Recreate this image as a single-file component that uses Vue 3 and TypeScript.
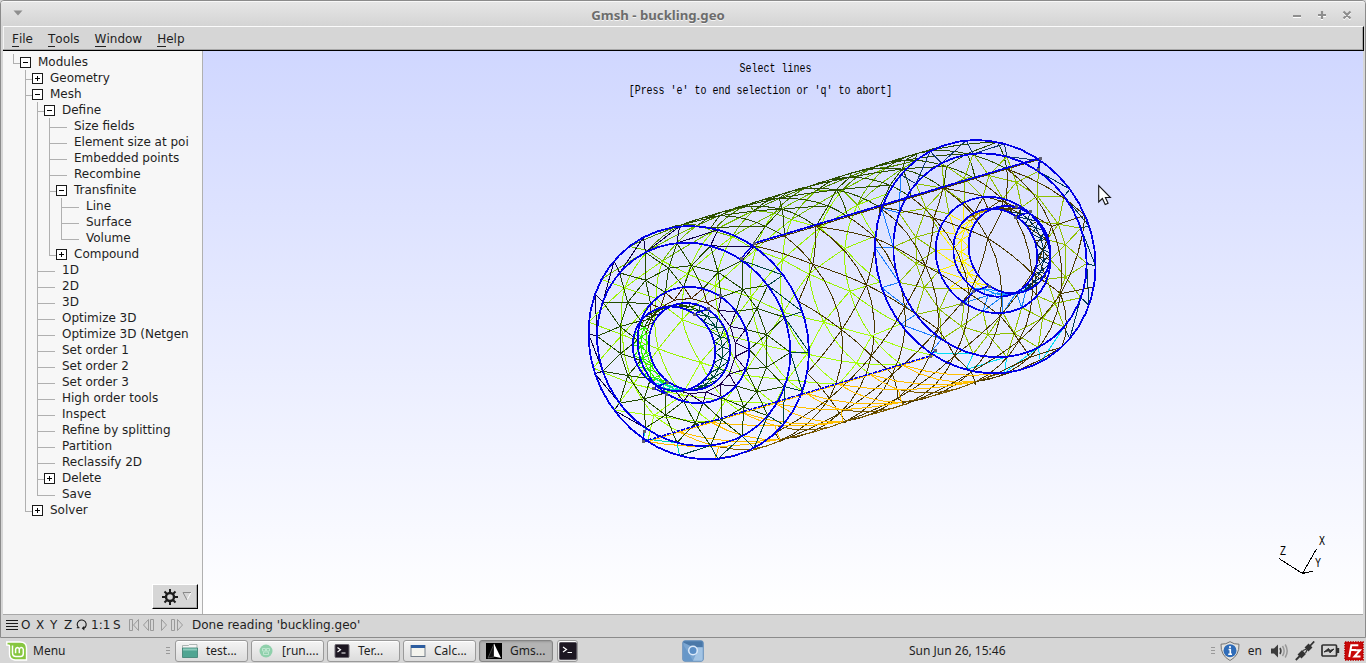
<script setup lang="ts">
type Kind = 'open' | 'closed' | 'leaf'
type Pt = { x: number; y: number; t: number; k?: number }
type Ring = { cx: number; cy: number; rx: number; ry: number }

const items: [number, string, Kind][] = [
  [0, 'Modules', 'open'],
  [1, 'Geometry', 'closed'],
  [1, 'Mesh', 'open'],
  [2, 'Define', 'open'],
  [3, 'Size fields', 'leaf'],
  [3, 'Element size at poi', 'leaf'],
  [3, 'Embedded points', 'leaf'],
  [3, 'Recombine', 'leaf'],
  [3, 'Transfinite', 'open'],
  [4, 'Line', 'leaf'],
  [4, 'Surface', 'leaf'],
  [4, 'Volume', 'leaf'],
  [3, 'Compound', 'closed'],
  [2, '1D', 'leaf'],
  [2, '2D', 'leaf'],
  [2, '3D', 'leaf'],
  [2, 'Optimize 3D', 'leaf'],
  [2, 'Optimize 3D (Netgen', 'leaf'],
  [2, 'Set order 1', 'leaf'],
  [2, 'Set order 2', 'leaf'],
  [2, 'Set order 3', 'leaf'],
  [2, 'High order tools', 'leaf'],
  [2, 'Inspect', 'leaf'],
  [2, 'Refine by splitting', 'leaf'],
  [2, 'Partition', 'leaf'],
  [2, 'Reclassify 2D', 'leaf'],
  [2, 'Delete', 'closed'],
  [2, 'Save', 'leaf'],
  [1, 'Solver', 'closed'],
]

// A guide continues below a row while a later sibling exists at that level.
function continues(index: number, level: number): boolean {
  for (let i = index + 1; i < items.length; i++) {
    if (items[i][0] === level) return true
    if (items[i][0] < level) return false
  }
  return false
}
const rows = items.map(([level, label, kind], i) => ({
  label,
  kind,
  guides: Array.from({ length: level }, (_, l) => continues(i, l)),
  more: continues(i, level),
}))

const menus = ['File', 'Tools', 'Window', 'Help']
const tasks = [
  { icon: 'folder', label: 'test...' },
  { icon: 'globe', label: '[run....' },
  { icon: 'term', label: 'Ter...' },
  { icon: 'window', label: 'Calc...' },
  { icon: 'gmsh', label: 'Gms...' },
]

// ---- mesh ----
const SKEW = 0.08
const RAD = Math.PI / 180
const ring = (cx: number, cy: number, rx: number, ry: number): Ring => ({ cx, cy, rx, ry })
const at = (r: Ring, deg: number): Pt => ({
  x: r.cx + r.rx * Math.cos(deg * RAD),
  y: r.cy + r.ry * Math.sin(deg * RAD + SKEW),
  t: deg,
})
const mix = (a: Ring, b: Ring, k: number): Ring =>
  ring(a.cx + (b.cx - a.cx) * k, a.cy + (b.cy - a.cy) * k, a.rx + (b.rx - a.rx) * k, a.ry + (b.ry - a.ry) * k)

const front = {
  rim: ring(698.7, 342.7, 110.3, 116.7),
  face: ring(693.7, 344.3, 96.7, 101.7),
  lip: ring(693.3, 345, 55.8, 58.2),
  boreOut: ring(689.3, 346.5, 40.7, 43.5),
  boreIn: ring(674, 348.8, 41.3, 42.3),
}
const back = {
  rim: ring(985.3, 256.7, 110.3, 116.7),
  face: ring(990, 255.3, 96.7, 102),
  lip: ring(993, 255, 57.5, 58.2),
  boreOut: ring(995.3, 252.7, 42, 44),
  boreIn: ring(1009.5, 249.7, 41, 43.7),
}

let seed = 7
const rnd = () => {
  seed = (seed * 16807) % 2147483647
  return seed / 2147483647 - 0.5
}
const paths: Record<string, string> = {}
const draw = (color: string, pts: Pt[]) => {
  paths[color] = (paths[color] ?? '') + 'M' + pts.map((p) => `${p.x.toFixed(1)} ${p.y.toFixed(1)}`).join('L')
}
const onShell = (k: number, deg: number): Pt => ({ ...at(mix(front.rim, back.rim, k), deg), k })
// Edges on the shell are curved: they follow the surface between their nodes.
const edge = (color: string, a: Pt, b: Pt) => {
  if (a.k === undefined || b.k === undefined) return draw(color, [a, b])
  const pts = [a]
  for (let s = 1; s < 4; s++) pts.push(onShell(a.k + ((b.k - a.k) * s) / 4, a.t + ((b.t - a.t) * s) / 4))
  pts.push(b)
  draw(color, pts)
}
const circle = (r: Ring, start: number, n: number, jitter = 0): Pt[] => {
  const list: Pt[] = []
  for (let i = 0; i < n; i++) list.push(at(r, start + (i * 360) / n + rnd() * jitter))
  list.push({ ...list[0], t: list[0].t + 360 })
  return list
}
type Shade = (deg: number) => string
const strip = (a: Pt[], b: Pt[], shade: Shade) => {
  let i = 0
  let j = 0
  edge(shade(a[0].t), a[0], b[0])
  while (i < a.length - 1 || j < b.length - 1) {
    const stepA = j === b.length - 1 || (i < a.length - 1 && a[i + 1].t <= b[j + 1].t)
    if (stepA) i++
    else j++
    edge(shade((a[i].t + b[j].t) / 2), a[i], b[j])
  }
}
const chain = (a: Pt[], shade: Shade) => {
  for (let i = 1; i < a.length; i++) edge(shade((a[i].t + a[i - 1].t) / 2), a[i - 1], a[i])
}
const norm = (d: number) => ((d % 360) + 360) % 360

// outer shell: two halves joined at the seams
const LAYERS = 9
const shell = (from: number, to: number, count: number, shade: Shade) => {
  let prev: Pt[] = []
  const step = (to - from) / count
  for (let l = 0; l <= LAYERS; l++) {
    const pts: Pt[] = []
    const odd = l % 2 === 1
    const base = l / LAYERS
    const rim = l === 0 || l === LAYERS
    pts.push(onShell(base, from))
    for (let i = odd && !rim ? 0 : 1; i < count; i++) {
      const k = rim ? base : base + rnd() * 0.025
      const d = from + i * step + (odd && !rim ? step / 2 : 0) + (rim ? 0 : rnd() * 6)
      pts.push(onShell(k, d))
    }
    pts.push(onShell(base, to))
    if (l > 0) strip(prev, pts, shade)
    if (l > 0 && l < LAYERS) chain(pts, shade)
    prev = pts
  }
}
shell(117.5, 299, 8, (d) => {
  if (d < 150) return '#a6ff0d'
  if (d < 212) return '#99f500'
  if (d < 228) return '#74bd00'
  if (d < 240) return '#4f8500'
  return '#2c4f00'
})

// rear end
const backFace = circle(back.face, -60, 18)
const backMid = circle(ring(991, 255.3, 76, 80), -50, 18, 6)
const backLip = circle(back.lip, -60, 18)
const olive: Shade = () => '#8fc000'
strip(backFace, backMid, olive)
chain(backMid, olive)
strip(backMid, backLip, olive)
strip(circle(back.rim, -60, 18), backFace, (d) => {
  const a = norm(d)
  if (a > 300 || a < 45) return '#003a55'
  if (a < 120) return '#00dcf5'
  if (a < 215) return '#1a7cff'
  return '#10386e'
})
const rearBore: Shade = (d) => {
  const a = norm(d)
  if (a > 120 && a < 215) return '#fff000'
  if (a >= 215 && a < 262) return '#b89a00'
  if (a >= 262 && a < 290) return '#4a3801'
  if (a > 62 && a <= 120) return '#1595ff'
  return '#003057'
}
strip(backLip, circle(back.boreOut, -60, 18), (d) => {
  const a = norm(d)
  if (a > 120 && a < 240) return '#fff000'
  if (a > 40 && a <= 120) return '#1480f5'
  return '#4a3801'
})
const rearMid = circle(mix(back.boreOut, back.boreIn, 0.5), -50, 24, 4)
strip(circle(back.boreOut, -60, 24), rearMid, rearBore)
chain(rearMid, rearBore)
strip(rearMid, circle(back.boreIn, -60, 24), rearBore)

shell(-61, 117.5, 5, (d) => {
  if (d < 72) return '#4a3800'
  if (d < 86) return '#7d5c00'
  return '#ffbf00'
})

// near end
const frontFace = circle(front.face, -60, 18)
const frontMid = circle(ring(693.7, 344.5, 74.5, 79), -50, 18, 5)
const frontLip = circle(front.lip, -60, 18)
const green: Shade = () => '#214a00'
strip(frontFace, frontMid, green)
chain(frontMid, green)
strip(frontMid, frontLip, green)
strip(circle(front.rim, -60, 18), frontFace, (d) => {
  const a = norm(d)
  if (a > 300 || a < 100) return '#004540'
  if (a < 122) return '#00d8b0'
  return '#0c0048'
})
const lipShade: Shade = (d) => {
  const a = norm(d)
  if (a > 200 && a < 300) return '#4a2600'
  if (a >= 300 || a < 110) return '#1c004c'
  return '#45e600'
}
const lipMid = circle(mix(front.lip, front.boreOut, 0.7), -50, 18, 4)
strip(frontLip, lipMid, lipShade)
chain(lipMid, lipShade)
const nearBore: Shade = (d) => {
  const a = norm(d)
  if (a > 125 && a < 205) return '#2bf000'
  if (a >= 205 && a < 290) return '#1f4d00'
  if (a > 75 && a <= 125) return '#00e0b0'
  return '#004a38'
}
const nearMid = circle(mix(front.boreOut, front.boreIn, 0.5), -50, 24, 4)
strip(circle(front.boreOut, -60, 24), nearMid, nearBore)
chain(nearMid, nearBore)
strip(nearMid, circle(front.boreIn, -60, 24), nearBore)

const outline = (r: Ring): string => {
  let d = ''
  for (let a = 0; a < 360; a += 8) {
    const p = at(r, a)
    d += `${a ? 'L' : 'M'}${p.x.toFixed(1)} ${p.y.toFixed(1)}`
  }
  return d + 'Z'
}
const curves = [...Object.values(front), ...Object.values(back)].map(outline)
const knots: [number, number][] = [
  [754, 243.5], [741.5, 258], [720.5, 295], [708.5, 308.5], [694, 314], [644, 431], [643, 441.5],
  [653, 388], [666, 394], [667.5, 382.5], [1040, 158], [1038, 169], [1016, 206], [1015.5, 217.5],
  [1030.5, 211.5], [935, 350], [930, 356.5], [961.5, 304.5], [973.5, 291.5], [989, 286],
]
</script>

<template>
  <div class="screen">
    <section class="window">
      <header class="titlebar">
        <svg class="tri" width="10" height="7" viewBox="0 0 10 7"><path d="M0.5 0.5h9L5 5.5z" fill="#8e8e8e" /></svg>
        <h1>Gmsh - buckling.geo</h1>
        <svg class="winbtns" width="60" height="14" viewBox="0 0 60 14" fill="none">
          <g stroke="#fff" stroke-width="2.2" transform="translate(0 1)"><path d="M0 8h8M25 7h8M29 3v8M50.500 3.500l7 7M57.500 3.500l-7 7" /></g>
          <g stroke="#8e8e8e" stroke-width="2.2"><path d="M0 8h8M25 7h8M29 3v8M50.500 3.500l7 7M57.500 3.500l-7 7" /></g>
        </svg>
      </header>
      <nav class="menubar">
        <span v-for="m in menus" :key="m"><u>{{ m[0] }}</u>{{ m.slice(1) }}</span>
      </nav>
      <main class="body">
        <aside class="side">
          <ul class="tree">
            <li v-for="r in rows" :key="r.label">
              <i v-for="(g, n) in r.guides" :key="n" class="guide" :class="{ on: g }"></i>
              <span class="joint" :class="[r.kind, { more: r.more }]">
                <svg v-if="r.kind !== 'leaf'" width="11" height="11" viewBox="0 0 11 11" shape-rendering="crispEdges">
                  <path d="M.5.5h10v10h-10z" fill="#fff" stroke="#1a1a1a" />
                  <path d="M3 5.500h5" stroke="#000" />
                  <path v-if="r.kind === 'closed'" d="M5.500 3v5" stroke="#000" />
                </svg>
              </span>
              <span>{{ r.label }}</span>
            </li>
          </ul>
          <button class="gear">
            <svg width="16" height="16" viewBox="0 0 16 16" fill="none" stroke="#1c1c1c">
              <circle cx="8" cy="8" r="4" stroke-width="2.400" />
              <path d="M8 0v3.500M8 12.500v3.500M0 8h3.500M12.500 8h3.500M2.500 2.500l2.300 2.300M11.200 11.200l2.300 2.300M13.500 2.500l-2.300 2.300M4.800 11.200l-2.300 2.300" stroke-width="2" />
            </svg>
            <svg width="10" height="9" viewBox="0 0 10 9" fill="none"><path d="M9 .5L5 8" stroke="#fff" /><path d="M5 8L1 .5h8" stroke="#8a8a8a" /></svg>
          </button>
        </aside>
        <div class="canvas">
          <svg class="scene" width="1160" height="563" viewBox="203 51 1160 563" fill="none">
            <g shape-rendering="crispEdges">
              <path v-for="(d, c) in paths" :key="c" :d="d" :stroke="c" />
              <path d="M753 243.500L1040 158" stroke="#0000e6" stroke-width="1.700" />
              <path d="M643 441.500L930 356" stroke="#0000e6" stroke-width="1.500" stroke-dasharray="4 1" />
              <path v-for="(d, i) in curves" :key="i" :d="d" stroke="#0000e6" stroke-width="1.800" />
              <path d="M754 243.500L741.500 258M708.500 308.500L694 314M643 441.500L644 431M653 388L666 394M667.500 382.500L653 388M1040 158L1038 169M1015.500 217.500L1030.500 211.500M935 350L930 356.500M961.500 304.500L973.500 291.500L989 286" stroke="#0000e6" stroke-width="1.500" />
              <rect v-for="(k, i) in knots" :key="i" :x="k[0] - 1.5" :y="k[1] - 1.5" width="3" height="3" fill="#5e5e6e" />
              <path d="M1279 558.500L1302.500 573.500L1316.500 549M1302.500 573.500L1313 571" stroke="#000" />
            </g>
            <g class="raster">
              <text transform="translate(775.500 72) scale(1 1.220)" text-anchor="middle">Select lines</text>
              <text transform="translate(760.500 94) scale(1 1.220)" text-anchor="middle">[Press 'e' to end selection or 'q' to abort]</text>
              <text transform="translate(1319 545) scale(1 1.220)">X</text>
              <text transform="translate(1315 567) scale(1 1.220)">Y</text>
              <text transform="translate(1280 555) scale(1 1.220)">Z</text>
            </g>
            <path d="M1098.700 185.500v16.500l3.700-3.500l2.800 6l2.900-1.300l-2.700-5.700h5z" fill="#fff" stroke="#111" stroke-width="1.100" />
          </svg>
        </div>
      </main>
      <footer class="status">
        <svg width="13" height="12" viewBox="0 0 13 12" shape-rendering="crispEdges"><path d="M0 1.500h12M0 4.500h12M0 7.500h12M0 10.500h12" stroke="#1a1a1a" /></svg>
        <span class="o">O</span><span class="x">X</span><span class="y">Y</span><span class="z">Z</span>
        <svg class="rot" width="12" height="12" viewBox="0 0 12 12" fill="none" stroke="#1a1a1a" stroke-width="1.100"><path d="M2.600 8.700A4.500 4.500 0 1 1 8 9.300" /><path d="M.8 8.700H3.500" /><path d="M8.300 6.800L5.700 9.300L8.300 11.500z" fill="#1a1a1a" stroke="none" /></svg>
        <span class="ratio">1:1</span><span class="s">S</span>
        <svg class="play" width="54" height="12" viewBox="0 0 54 12" fill="none" stroke="#9a9a9a">
          <path d="M.5.5h3v11h-3zM9.500.5v11L4.500 6zM19.500.5v11L14.500 6zM21.500.5h3v11h-3zM32.500.5v11L37.500 6zM42.500.5h3v11h-3zM48.500.5v11L53.500 6z" />
        </svg>
        <span class="msg">Done reading 'buckling.geo'</span>
      </footer>
    </section>
    <footer class="panel">
      <svg class="mint" width="22" height="20" viewBox="0 0 22 20">
        <path d="M.8 1H14Q20.500 1 20.500 7V19H9Q3.500 18.500 3.500 13V5Q3.500 4 .8 4z" fill="#86c63f" stroke="#fff" stroke-width="1.400" />
        <path d="M6.500 4.500V12Q6.500 15.500 10 15.500H14.500Q17.300 15.500 17.300 12.500V8.500Q17 6.300 14.800 6.600Q13.300 7 13.300 8.500V12.200M13.300 8.500Q13 6.500 11.300 6.600Q9.600 7 9.600 8.500V12.200" fill="none" stroke="#fff" stroke-width="1.500" />
      </svg>
      <span class="menu">Menu</span>
      <i class="grip"></i>
      <div class="tasks">
        <div v-for="t in tasks" :key="t.label" class="task" :class="{ active: t.icon === 'gmsh' }">
          <svg width="16" height="16" viewBox="0 0 16 16">
            <template v-if="t.icon === 'folder'">
              <path d="M.5 2.500h6l1-1h7.500v5H.5z" fill="#f4f4f4" stroke="#9aa5a2" stroke-width=".8" />
              <path d="M.5 5h15v9.500H.5z" fill="#4fa592" stroke="#3b7e70" stroke-width=".8" />
              <path d="M1 5.500h14v2H1z" fill="#8ccbbc" />
            </template>
            <template v-else-if="t.icon === 'globe'">
              <circle cx="8" cy="8" r="6.500" fill="#8fd0ab" />
              <path d="M4.500 5.500h3v2.500h-3zM8.500 5.500h3v2.500h-3zM5.500 9h5v2.500h-5z" fill="none" stroke="#c2e8d3" stroke-width=".9" />
            </template>
            <template v-else-if="t.icon === 'term'">
              <rect x="1" y="1.500" width="14" height="13" rx="1" fill="#1d1722" stroke="#6c6870" />
              <path d="M3.500 4.500l3 2.200l-3 2.200M7.500 10h4" fill="none" stroke="#fff" stroke-width="1.200" />
            </template>
            <template v-else-if="t.icon === 'window'">
              <rect x="1" y="2.500" width="14" height="11" fill="#f4f4ee" stroke="#76808a" />
              <path d="M1 2h14v3H1z" fill="#2d5da0" />
            </template>
            <template v-else>
              <path d="M0 0h16v16H0z" fill="#000" /><path d="M8 1v13l-6 1z" fill="#111" stroke="#888" stroke-width=".5" /><path d="M8 .5L15 15L8 13.500z" fill="#fff" />
            </template>
          </svg>
          <span>{{ t.label }}</span>
        </div>
        <div class="task mini">
          <svg width="18" height="18" viewBox="0 0 18 18"><rect x=".5" y=".5" width="17" height="17" rx="1" fill="#1d1722" stroke="#55505a" /><path d="M4 5l3.500 2.500L4 10M8.500 10.500h4.500" fill="none" stroke="#fff" stroke-width="1.200" /></svg>
        </div>
      </div>
      <svg class="chrome" width="22" height="22" viewBox="0 0 22 22">
        <rect x=".8" y=".8" width="20.400" height="20.400" rx="2" fill="#7ba6d2" stroke="#5a88b8" />
        <path d="M1.300 2.500Q1.300 1.300 2.500 1.300H19.500Q20.700 1.300 20.700 2.500V7H11z" fill="#4a78a8" />
        <path d="M1.300 5L7.500 14.500L11 20.700H2.500Q1.300 20.700 1.300 19.500z" fill="#6797c8" />
        <path d="M15 12L11 20.700H19.500Q20.700 20.700 20.700 19.500V7.500H14z" fill="#a3c4e4" />
        <circle cx="11" cy="10.500" r="5" fill="#dceafa" /><circle cx="11" cy="10.500" r="3.500" fill="#5b8fc6" />
      </svg>
      <span class="clock">Sun Jun 26, 15:46</span>
      <div class="tray">
        <i class="grip"></i>
        <svg class="shield" width="20" height="20" viewBox="0 0 20 20">
          <path d="M10 .7Q14 3.500 19 3.200Q19.500 14.500 10 19.500Q.5 14.500 1 3.200Q6 3.500 10 .7z" fill="#e3e3e0" stroke="#747474" />
          <circle cx="10" cy="9.700" r="6.500" fill="#2f6cb8" /><path d="M10 5v2M8.600 8.500H10.300V13M8.200 13.200h3.800" stroke="#fff" stroke-width="1.600" fill="none" />
        </svg>
        <span class="lang">en</span>
        <svg class="vol" width="19" height="16" viewBox="0 0 19 16" fill="none"><path d="M1 5.500h3l4-4v13l-4-4H1z" fill="#3c3c3c" /><path d="M10 5q1.800 3 0 6" stroke="#444" stroke-width="1.600" /><path d="M12.500 3q3.200 5 0 10M15.200 1.500q4 6.500 0 13" stroke="#999" stroke-width="1.500" /></svg>
        <svg class="plug" width="20" height="20" viewBox="0 0 20 20" stroke="#333" fill="none"><path d="M.8 19l5-5M14.500 5.500l4.700-5" stroke-width="1.800" /><path d="M4.500 15.500l4.500-4.500" stroke-width="5.500" /><path d="M11.500 8.500l4-4" stroke-width="5.500" /><path d="M8 9.500l3.500-1.500M10.500 12l1.500-3" stroke-width="1.200" /></svg>
        <svg class="bat" width="19" height="13" viewBox="0 0 19 13"><rect x="1" y="1" width="14.500" height="11" rx="1" fill="none" stroke="#303030" stroke-width="1.700" /><path d="M16 4h2.200v5H16z" fill="#303030" /><path d="M3 8l4.500-3.500l1.500 2l4-1.500l-4 3.800l-1.500-2z" fill="#303030" stroke="#303030" /></svg>
        <svg class="fz" width="20" height="20" viewBox="0 0 20 20"><rect x="1" y="1" width="18" height="18" fill="#c80a0a" stroke="#b80000" stroke-width="1.600" stroke-dasharray="1.500 1" /><path d="M5.200 16L7.300 4.200h7M6.500 9h5.500M10.500 9.200h5.500L10.500 15.500h6" fill="none" stroke="#fff" stroke-width="2" /></svg>
      </div>
    </footer>
  </div>
</template>

<style>
body { margin: 0; overflow: hidden; background: #d6d6d6; }
</style>

<style scoped>
* { box-sizing: border-box; }
.screen { width: 1366px; height: 663px; display: flex; flex-direction: column; background: #d6d6d6; color: #1e1e1e; font: 12px "DejaVu Sans", sans-serif; overflow: hidden; }
.window { height: 638px; display: flex; flex-direction: column; border: 1px solid #8b8b8b; border-radius: 4px 4px 0 0; padding: 0 2px; background: #d6d6d6; }
.titlebar { height: 25px; flex: none; margin: 0 -2px; padding: 0 12px 0 12px; display: flex; align-items: center; border-top: 1px solid #f8f8f8; border-radius: 3px 3px 0 0; background: linear-gradient(#e6e6e6, #d4d4d4); }
.tri { width: 10px; margin: 0 0 1px 0; }
h1 { flex: 1; margin: 1px 0 0 -24px; text-align: center; font: bold 13.200px/18px "Noto Sans", sans-serif; color: #6c6c6c; text-shadow: 0 1px #f4f4f4; }
.winbtns { margin: 1px 0 0 -24px; }
.menubar { height: 25px; flex: none; margin-right: -1px; padding: 0 0 0 9px; display: flex; gap: 15px; line-height: 24px; background: #d6d6d6; border: solid; border-width: 1px 1px 1px 0; border-color: #fbfbfb #000 #000; box-shadow: inset 0 -1px #a8a8a8, inset -1px 0 #a8a8a8, inset 1px 0 #f4f4f4; }
.menubar u { text-decoration: none; position: relative; }
.menubar u::after { content: ""; position: absolute; left: 0; right: 0; bottom: -1px; height: 1px; background: #222; }
.body { flex: 1; display: flex; min-height: 0; }
.side { width: 200px; flex: none; display: flex; flex-direction: column; justify-content: space-between; background: #f7f7f7; border-right: 1px solid #b0b0b0; }
.tree { list-style: none; margin: 0; padding: 3px 0 0 10px; width: 186px; overflow: hidden; }
.tree li { display: flex; height: 16px; line-height: 16px; white-space: nowrap; }
.guide { width: 12px; flex: none; }
.guide.on { border-left: 1px solid #b0b0b0; }
.joint { position: relative; width: 25px; flex: none; height: 16px; padding: 3px 0 0 7px; line-height: 0; }
.joint::before { content: ""; position: absolute; left: 0; top: 0; height: 10px; border-left: 1px solid #b0b0b0; }
.joint.more::before { height: 16px; }
.joint::after { content: ""; position: absolute; left: 0; top: 9px; width: 7px; height: 1px; background: #b0b0b0; }
.joint.leaf::after { width: 18px; }
.gear { align-self: flex-end; width: 46px; height: 25px; margin: 0 4px 5px 0; padding: 0 5px 0 9px; display: flex; align-items: center; justify-content: space-between; background: #d6d6d6; border: solid; border-width: 1px; border-color: #fff #000 #000 #fff; box-shadow: inset -1px -1px #a8a8a8; }
.canvas { flex: 1; min-width: 0; background: linear-gradient(#d0d7ff, #fff); }
.scene { display: block; }
.raster { fill: #000; font: 10px "Liberation Mono", monospace; }
.status { height: 23px; flex: none; display: flex; align-items: center; padding: 0 0 3px 3px; border-top: 1px solid #a8a8a8; white-space: nowrap; }
.o { width: 15px; margin-left: 2px; }
.x { width: 14px; }
.y { width: 14px; }
.z { width: 12px; }
.ratio { width: 22px; margin-left: 3px; }
.s { width: 15px; }
.play { margin-left: 1px; }
.msg { margin-left: 9px; }
.panel { height: 25px; display: flex; align-items: center; padding-left: 6px; font: 12px "Noto Sans", sans-serif; white-space: nowrap; }
.menu { width: 133px; margin-left: 5px; }
.grip { width: 4px; height: 8px; background: repeating-linear-gradient(#999 0 1px, transparent 1px 3px); flex: none; }
.tasks { display: flex; gap: 3px; margin-left: 5px; }
.task { width: 73px; height: 22px; display: flex; align-items: center; gap: 8px; padding: 0 6px; border: 1px solid #9a9a9a; border-radius: 3px; background: linear-gradient(#f4f4f4, #dcdcdc); box-shadow: inset 0 1px #fff; }
.task svg { flex: none; }
.task.active { background: #b4b4b4; border-color: #858585; box-shadow: inset 0 1px 2px #999; width: 74px; }
.task.mini { width: 21px; padding: 0 .5px; margin-left: 1px; }
.chrome { margin-left: 104px; }
.clock { margin-left: 205px; }
.tray { margin-left: auto; display: flex; align-items: center; }
.shield { margin-left: 5px; }
.lang { margin-left: 8px; }
.vol { margin-left: 8px; }
.plug { margin-left: 6px; }
.bat { margin-left: 6px; }
.fz { margin: 0 2px 0 4px; }
</style>
